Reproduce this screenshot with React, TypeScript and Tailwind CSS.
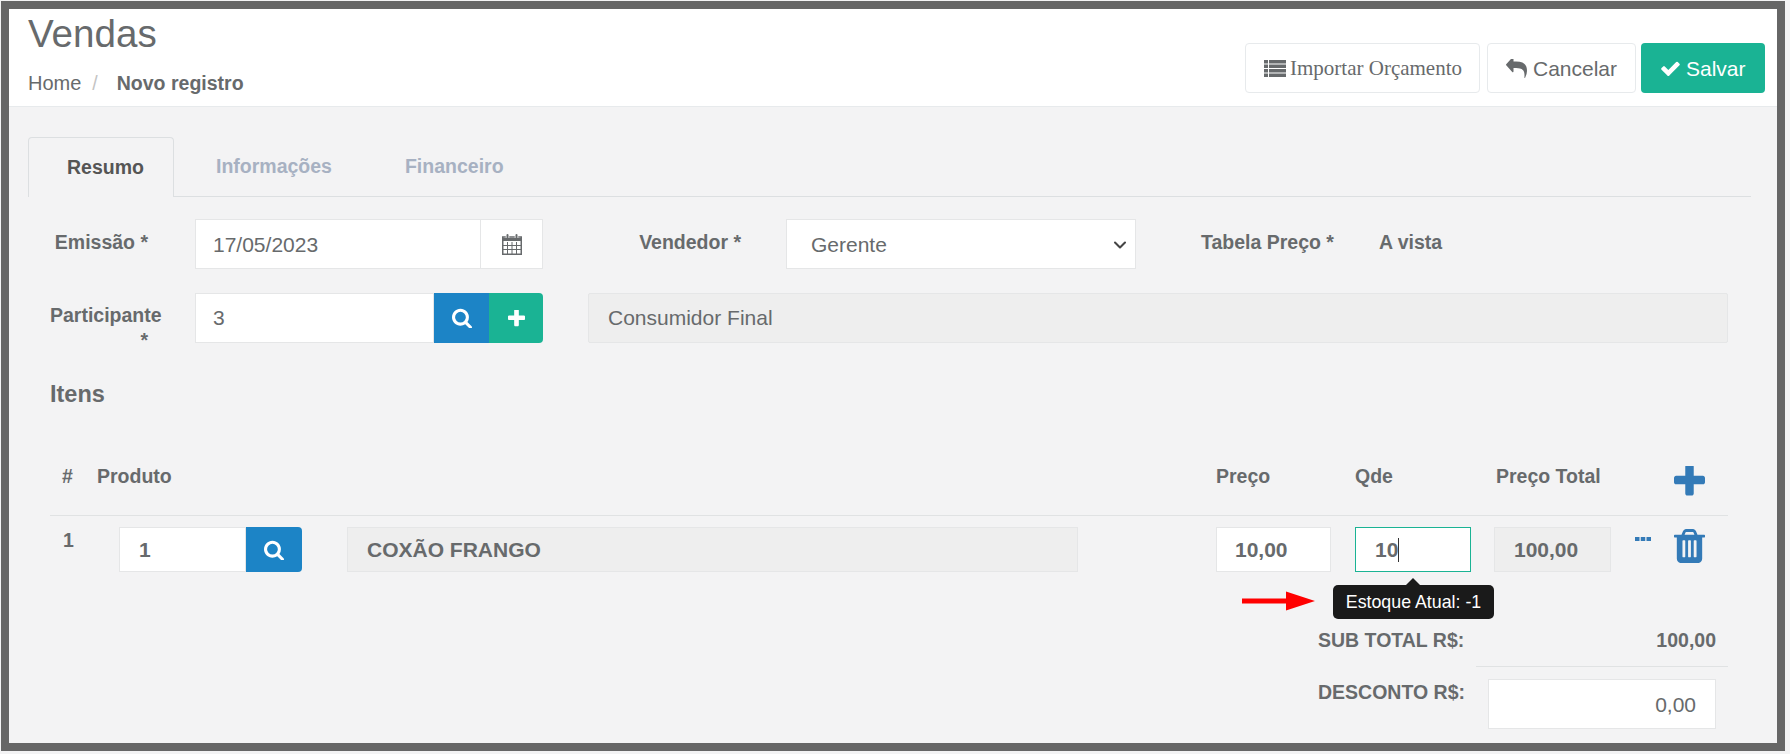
import React from 'react';
import { ChevronDown } from 'lucide-react';

type IconProps = { className?: string };

const PlusIcon: React.FC<IconProps> = ({ className }) => (
  <svg viewBox="192 192 1408 1408" className={className} fill="currentColor">
    <path d="M1600 736v192q0 40-28 68t-68 28h-416v416q0 40-28 68t-68 28h-192q-40 0-68-28t-28-68v-416h-416q-40 0-68-28t-28-68v-192q0-40 28-68t68-28h416v-416q0-40 28-68t68-28h192q40 0 68 28t28 68v416h416q40 0 68 28t28 68z" />
  </svg>
);

const SearchIcon: React.FC<IconProps> = ({ className }) => (
  <svg viewBox="64 64 1664 1664" className={className} fill="currentColor">
    <path d="M1216 832q0-185-131.5-316.5t-316.5-131.5-316.5 131.5-131.5 316.5 131.5 316.5 316.5 131.5 316.5-131.5 131.5-316.5zm512 832q0 52-38 90t-90 38q-54 0-90-38l-343-342q-179 124-399 124-143 0-273.5-55.5t-225-150-150-225-55.5-273.5 55.5-273.5 150-225 225-150 273.5-55.5 273.5 55.5 225 150 150 225 55.5 273.5q0 220-124 399l343 343q37 37 37 90z" />
  </svg>
);

const CheckIcon: React.FC<IconProps> = ({ className }) => (
  <svg viewBox="121 270 1550 1252" className={className} fill="currentColor">
    <path d="M1671 566q0 40-28 68l-724 724-136 136q-28 28-68 28t-68-28l-136-136-362-362q-28-28-28-68t28-68l136-136q28-28 68-28t68 28l294 295 656-657q28-28 68-28t68 28l136 136q28 28 28 68z" />
  </svg>
);

const ReplyIcon: React.FC<IconProps> = ({ className }) => (
  <svg viewBox="0 192 1792 1472" preserveAspectRatio="none" className={className} fill="currentColor">
    <path d="M1792 1120q0 166-127 451-3 7-10.5 24t-13.5 30-13 22q-12 17-28 17-15 0-23.5-10t-8.5-25q0-9 2.5-26.5t2.5-23.5q5-68 5-123 0-101-17.5-181t-48.5-138.5-80-101-105.5-69.5-133-42.5-154-21.5-175.5-6h-224v256q0 26-19 45t-45 19-45-19l-512-512q-19-19-19-45t19-45l512-512q19-19 45-19t45 19 19 45v256h224q713 0 875 403 53 134 53 333z" />
  </svg>
);

const TrashIcon: React.FC<IconProps> = ({ className }) => (
  <svg viewBox="192 128 1408 1536" className={className} fill="currentColor">
    <path d="M704 1376v-704q0-14-9-23t-23-9h-64q-14 0-23 9t-9 23v704q0 14 9 23t23 9h64q14 0 23-9t9-23zm256 0v-704q0-14-9-23t-23-9h-64q-14 0-23 9t-9 23v704q0 14 9 23t23 9h64q14 0 23-9t9-23zm256 0v-704q0-14-9-23t-23-9h-64q-14 0-23 9t-9 23v704q0 14 9 23t23 9h64q14 0 23-9t9-23zm-544-992h448l-48-117q-7-9-17-11h-317q-10 2-17 11zm928 32v64q0 14-9 23t-23 9h-96v948q0 83-47 143.5t-113 60.5h-832q-66 0-113-58.5t-47-141.5v-952h-96q-14 0-23-9t-9-23v-64q0-14 9-23t23-9h309l70-167q15-37 54-63t79-26h320q40 0 79 26t54 63l70 167h309q14 0 23 9t9 23z" />
  </svg>
);

const ListIcon: React.FC<IconProps> = ({ className }) => (
  <svg viewBox="0 0 22 17" className={className} fill="currentColor">
    <rect x="0" y="0" width="4" height="3.5" />
    <rect x="5" y="0" width="17" height="3.5" />
    <rect x="0" y="4.5" width="4" height="3.5" />
    <rect x="5" y="4.5" width="17" height="3.5" />
    <rect x="0" y="9" width="4" height="3.5" />
    <rect x="5" y="9" width="17" height="3.5" />
    <rect x="0" y="13.5" width="4" height="3.5" />
    <rect x="5" y="13.5" width="17" height="3.5" />
  </svg>
);

const CalendarIcon: React.FC<IconProps> = ({ className }) => (
  <svg viewBox="0 0 20 21" className={className} fill="none" stroke="currentColor">
    <rect x="0.75" y="3" width="18.5" height="17.25" strokeWidth="1.5" />
    <path d="M0 5.5h20" strokeWidth="3" />
    <path d="M1 11.5h18M1 15.5h18M5.5 8v12M10 8v12M14.5 8v12" strokeWidth="1" />
    <path d="M5.5 1v3M14.5 1v3" stroke="#ffffff" strokeWidth="3.5" />
    <path d="M5.5 1v3M14.5 1v3" strokeWidth="2" strokeLinecap="round" />
  </svg>
);

const Field: React.FC<{ className?: string; children?: React.ReactNode }> = ({ className = '', children }) => (
  <div className={`flex items-center border border-[#e5e6e7] text-[21px] ${className}`}>{children}</div>
);

const App: React.FC = () => {
  return (
    <div className="h-[754px] w-[1790px] overflow-hidden bg-[#f3f3f4] pt-px pl-px font-['Liberation_Sans',Arial,sans-serif] text-[19.5px] leading-[27px] text-[#676a6c]">
      <div className="flex h-[750px] w-[1784px] flex-col overflow-hidden border-8 border-[#666666] bg-[#f3f3f4]">
        {/* page heading */}
        <div className="flex h-[98px] shrink-0 justify-between border-b border-[#e7eaec] bg-white pr-3 pl-[19px]">
          <div>
            <h2 className="mt-[3px] text-[38.6px] leading-[44px]">Vendas</h2>
            <div className="mt-[14px] flex">
              <span className="text-[20px]">Home</span>
              <span className="ml-[11px] text-[#c4c4c4]">/</span>
              <span className="ml-[19px] font-bold">Novo registro</span>
            </div>
          </div>
          <div className="flex items-start gap-[7px] pt-[34px]">
            <button className="flex h-[50px] w-[235px] items-center rounded-[4px] border border-[#e7eaec] bg-white pl-[18px] font-['Liberation_Serif',serif]">
              <ListIcon className="h-[17px] w-[22px]" />
              <span className="ml-[4px] text-[21px]">Importar Orçamento</span>
            </button>
            <button className="mr-[-2px] flex h-[50px] w-[149px] items-center rounded-[4px] border border-[#e7eaec] bg-white pl-[18px] text-[21px]">
              <ReplyIcon className="h-[19px] w-[21px]" />
              <span className="ml-[6px]">Cancelar</span>
            </button>
            <button className="flex h-[50px] w-[124px] items-center rounded-[4px] bg-[#1ab394] pl-[20px] text-[21px] text-white">
              <CheckIcon className="h-[15px] w-[19px]" />
              <span className="ml-[6px]">Salvar</span>
            </button>
          </div>
        </div>

        {/* tabs */}
        <div className="pt-[30px] pr-[26px] pl-[19px]">
          <div className="flex h-[60px] border-b border-[#dcdfe1] font-bold">
            <div className="mb-[-1px] flex w-[146px] items-center rounded-t-[4px] border border-b-0 border-[#dcdfe1] bg-[#f3f3f4] pl-[38px] text-[#555555]">
              Resumo
            </div>
            <div className="ml-[42px] flex items-center text-[#a7b1c2]">Informações</div>
            <div className="ml-[73px] flex items-center text-[#a7b1c2]">Financeiro</div>
          </div>

          <div className="pr-[23px] pl-[22px]">
            {/* Emissão / Vendedor / Tabela */}
            <div className="mt-[22px] flex items-start">
              <label className="w-[98px] pt-[10px] text-right font-bold">Emissão *</label>
              <Field className="ml-[47px] h-[50px] w-[348px] bg-white pl-[17px]">
                <span className="grow">17/05/2023</span>
                <span className="flex h-full w-[62px] items-center justify-center border-l border-[#e5e6e7]">
                  <CalendarIcon className="h-[21px] w-[20px]" />
                </span>
              </Field>
              <label className="ml-[96px] w-[102px] pt-[10px] text-right font-bold">Vendedor *</label>
              <div className="relative ml-[45px] h-[50px] w-[350px]">
                <select className="h-full w-full appearance-none border border-[#e5e6e7] bg-white pl-[24px] text-[21px]">
                  <option>Gerente</option>
                </select>
                <ChevronDown className="absolute top-[16px] right-[6px] h-[20px] w-[20px] text-[#444444]" strokeWidth={2.5} />
              </div>
              <label className="ml-[65px] pt-[10px] font-bold">Tabela Preço *</label>
              <span className="ml-[45px] pt-[10px] font-bold">A vista</span>
            </div>

            {/* Participante */}
            <div className="mt-[24px] flex items-start">
              <label className="w-[98px] pt-[10px] text-right leading-[25px] font-bold">Participante *</label>
              <div className="ml-[47px] flex h-[50px] w-[348px]">
                <Field className="grow bg-white pb-[2px] pl-[17px]">3</Field>
                <button className="flex w-[55px] items-center justify-center bg-[#1c84c6] text-white">
                  <SearchIcon className="h-[20px] w-[20px]" />
                </button>
                <button className="flex w-[54px] items-center justify-center rounded-r-[4px] bg-[#1ab394] text-white">
                  <PlusIcon className="h-[17px] w-[17px]" />
                </button>
              </div>
              <Field className="ml-[45px] h-[50px] grow rounded-[2px] bg-[#eeeeee] pb-[2px] pl-[19px]">Consumidor Final</Field>
            </div>

            <h3 className="mt-[27px] text-[23.5px] leading-[28px] font-bold">Itens</h3>

            {/* items header */}
            <div className="mt-[35px] flex h-[73px] items-start border-b border-[#e0e2e3] font-bold">
              <span className="ml-[12px] w-[35px] pt-[20px]">#</span>
              <span className="w-[1119px] pt-[20px]">Produto</span>
              <span className="w-[139px] pt-[20px]">Preço</span>
              <span className="w-[141px] pt-[20px]">Qde</span>
              <span className="w-[178px] pt-[20px]">Preço Total</span>
              <PlusIcon className="mt-[23px] h-[31px] w-[31px] text-[#337ab7]" />
            </div>

            {/* item row */}
            <div className="mt-[11px] flex items-start font-bold">
              <span className="ml-[13px] w-[56px]">1</span>
              <div className="flex h-[45px] w-[183px]">
                <Field className="grow bg-white pl-[19px]">1</Field>
                <button className="flex w-[56px] items-center justify-center rounded-r-[4px] bg-[#1c84c6] text-white">
                  <SearchIcon className="h-[20px] w-[20px]" />
                </button>
              </div>
              <Field className="ml-[45px] h-[45px] w-[731px] bg-[#eeeeee] pl-[19px]">COXÃO FRANGO</Field>
              <Field className="ml-[138px] h-[45px] w-[115px] bg-white pl-[18px]">10,00</Field>

              {/* Qde with stock tooltip */}
              <div className="relative ml-[24px]">
                <div className="flex h-[45px] w-[116px] items-center border border-[#1ab394] bg-white pl-[19px] text-[21px]">
                  10<span className="h-[24px] w-px bg-[#333333]" />
                </div>
                <div className="absolute top-[58px] left-[-22px] flex h-[34px] w-[161px] items-center justify-center rounded-[5px] bg-[#1a1a1a] text-[17.8px] font-normal text-white">
                  Estoque Atual: -1
                </div>
                <div className="absolute top-[51px] left-[51px] h-0 w-0 border-r-[7px] border-b-[7px] border-l-[7px] border-r-transparent border-b-[#1a1a1a] border-l-transparent" />
                <svg viewBox="0 0 73 20" className="absolute top-[64px] left-[-113px] h-[20px] w-[73px]" fill="#ff0000">
                  <path d="M0 7.5h44V0.5l29 9.5-29 9.5V12.5H0z" />
                </svg>
              </div>

              <Field className="ml-[23px] h-[45px] w-[117px] bg-[#eeeeee] pl-[19px]">100,00</Field>
              <svg viewBox="0 0 16 4" className="mt-[10px] ml-[24px] h-[4px] w-[16px] text-[#337ab7]" fill="currentColor">
                <rect x="0" y="0" width="4.5" height="4" />
                <rect x="5.75" y="0" width="4.5" height="4" />
                <rect x="11.5" y="0" width="4.5" height="4" />
              </svg>
              <TrashIcon className="mt-[2px] ml-[23px] h-[34px] w-[31px] text-[#337ab7]" />
            </div>

            {/* totals */}
            <div className="mt-[55px] flex items-start font-bold whitespace-nowrap">
              <span className="ml-[1268px] w-[146px] text-right">SUB TOTAL R$:</span>
              <span className="w-[252px] text-right">100,00</span>
              <span className="w-[12px]" />
            </div>
            <div className="mt-[12px] ml-[1426px] h-px bg-[#e0e2e3]" />
            <div className="mt-[12px] flex items-start whitespace-nowrap">
              <span className="ml-[1268px] w-[146px] text-right font-bold">DESCONTO R$:</span>
              <Field className="ml-[24px] h-[50px] w-[228px] justify-end bg-white pr-[19px] text-[20px]">0,00</Field>
            </div>
          </div>
        </div>
      </div>
    </div>
  );
};

export default App;
